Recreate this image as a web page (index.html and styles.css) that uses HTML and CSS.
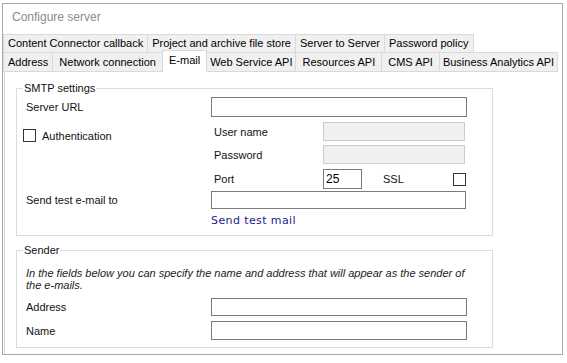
FILE: index.html
```html
<!DOCTYPE html>
<html>
<head>
<meta charset="utf-8">
<title>Configure server</title>
<link rel="stylesheet" href="styles.css">
</head>
<body>
<div class="window">
  <div class="title">Configure server</div>
  <div class="tabs">
    <div class="tab-row">
      <div class="tab">Content Connector callback</div>
      <div class="tab">Project and archive file store</div>
      <div class="tab">Server to Server</div>
      <div class="tab">Password policy</div>
    </div>
    <div class="tab-row row2">
      <div class="tab">Address</div>
      <div class="tab wide">Network connection</div>
      <div class="tab active">E-mail</div>
      <div class="tab narrow">Web Service API</div>
      <div class="tab wide">Resources API</div>
      <div class="tab wide">CMS API</div>
      <div class="tab narrow">Business Analytics API</div>
    </div>
  </div>
  <div class="page">
    <fieldset class="group smtp">
      <legend>SMTP settings</legend>
      <div class="row">
        <label class="lbl">Server URL</label>
        <input class="input" type="text">
      </div>
      <div class="auth">
        <div class="auth-check">
          <input class="check" type="checkbox">
          <span>Authentication</span>
        </div>
        <div class="auth-fields">
          <div class="sub-row">
            <span class="sub-lbl">User name</span>
            <input class="input dis" type="text" disabled>
          </div>
          <div class="sub-row pw">
            <span class="sub-lbl">Password</span>
            <input class="input dis" type="password" disabled>
          </div>
          <div class="sub-row">
            <span class="sub-lbl">Port</span>
            <input class="input port" type="text" value="25">
            <span class="ssl">SSL</span>
            <input class="check ssl-check" type="checkbox">
          </div>
        </div>
      </div>
      <div class="row send">
        <label class="lbl">Send test e-mail to</label>
        <input class="input send-input" type="text">
      </div>
      <div class="link-row"><a class="link">Send test mail</a></div>
    </fieldset>
    <fieldset class="group sender">
      <legend>Sender</legend>
      <p class="note">In the fields below you can specify the name and address that will appear as the sender of the e-mails.</p>
      <div class="row addr">
        <label class="lbl">Address</label>
        <input class="input addr-input" type="text">
      </div>
      <div class="row name">
        <label class="lbl">Name</label>
        <input class="input" type="text">
      </div>
    </fieldset>
  </div>
</div>
</body>
</html>
```

FILE: styles.css
```css
html, body {
  margin: 0;
  padding: 0;
  background: #fff;
}
body {
  font: 11px "Liberation Sans", Arial, sans-serif;
  color: #111;
}
.window {
  margin: 3px 0 0 2px;
  width: 561px;
  height: 352px;
  box-sizing: border-box;
  border: 1px solid #a9a9a9;
  display: flex;
  flex-direction: column;
  background: #fff;
}
.title {
  height: 30px;
  padding-left: 9px;
  line-height: 26px;
  font-size: 12px;
  color: #8c8c8c;
  flex: none;
}
.tabs {
  flex: none;
}
.tab-row {
  display: flex;
}
.tab {
  border: 1px solid #d9d9d9;
  background: #f0f0f0;
  padding: 0 4px;
  height: 19px;
  line-height: 17px;
  box-sizing: border-box;
  white-space: nowrap;
  color: #000;
}
.tab + .tab {
  margin-left: -1px;
}
.row2 {
  margin-top: -1px;
}
.row2 .tab {
  height: 20px;
  line-height: 18px;
}
.row2 .tab.wide {
  padding: 0 6px;
}
.row2 .tab.narrow {
  padding: 0 3px;
}
.row2 .tab.active {
  background: #fff;
  border-bottom: none;
  margin-top: -2px;
  height: 22px;
  padding: 0 6px;
  position: relative;
  z-index: 1;
}
.page {
  flex: 1;
  margin: -1px 6px 0 1px;
  border-top: 1px solid #d9d9d9;
  border-left: 1px solid #d9d9d9;
}
.group {
  margin: 10px 0 0 11px;
  width: 477px;
  min-width: 0;
  box-sizing: border-box;
  border: 1px solid #dcdcdc;
  padding: 2px 0 8px 6px;
}
.group legend {
  padding: 0 1px;
  margin: 0;
  line-height: 13px;
  color: #111;
}
.sender {
  margin-top: 8px;
  padding-bottom: 7px;
}
.row {
  display: flex;
  align-items: center;
}
.lbl {
  width: 188px;
  padding-left: 3px;
  box-sizing: border-box;
  flex: none;
}
.input {
  width: 256px;
  height: 20px;
  border: 1px solid #7a7a7a;
  border-radius: 0;
  box-sizing: border-box;
  background: #fff;
  padding: 0 2px;
  margin: 0;
  font: 12px "Liberation Sans", Arial, sans-serif;
  color: #000;
  outline: none;
  flex: none;
}
.check {
  appearance: none;
  -webkit-appearance: none;
  width: 13px;
  height: 13px;
  margin: 0;
  border: 1px solid #333;
  border-radius: 0;
  background: #fff;
  box-sizing: border-box;
  flex: none;
}
.auth {
  display: flex;
}
.auth-check {
  width: 188px;
  display: flex;
  align-items: center;
  gap: 6px;
  margin-top: 12px;
  height: 13px;
  flex: none;
}
.auth-fields {
  padding-left: 3px;
  width: 255px;
  box-sizing: border-box;
}
.sub-row {
  display: flex;
  align-items: center;
  margin-top: 5px;
}
.sub-row.pw {
  margin-top: 4px;
}
.sub-lbl {
  width: 109px;
  flex: none;
}
.input.dis {
  width: 142px;
  height: 19px;
  background: #f0f0f0;
  border-color: #cccccc;
}
.input.port {
  width: 39px;
  height: 20px;
  padding-left: 2px;
}
.ssl {
  margin-left: 21px;
}
.ssl-check {
  margin-left: auto;
}
.send {
  margin-top: 2px;
}
.send-input {
  width: 255px;
  height: 18px;
}
.link-row {
  margin-top: 4px;
  padding-left: 188px;
  line-height: 14px;
}
.link {
  font: 11px "DejaVu Sans", Verdana, sans-serif;
  letter-spacing: 0.4px;
  color: #22228a;
  cursor: pointer;
}
.note {
  margin: 8px 0 0;
  padding-left: 3px;
  width: 445px;
  font-style: italic;
  line-height: 12px;
  color: #222;
}
.addr {
  margin-top: 7px;
}
.addr-input {
  height: 18px;
}
.name {
  margin-top: 5px;
}
.name .input {
  height: 19px;
}
```
